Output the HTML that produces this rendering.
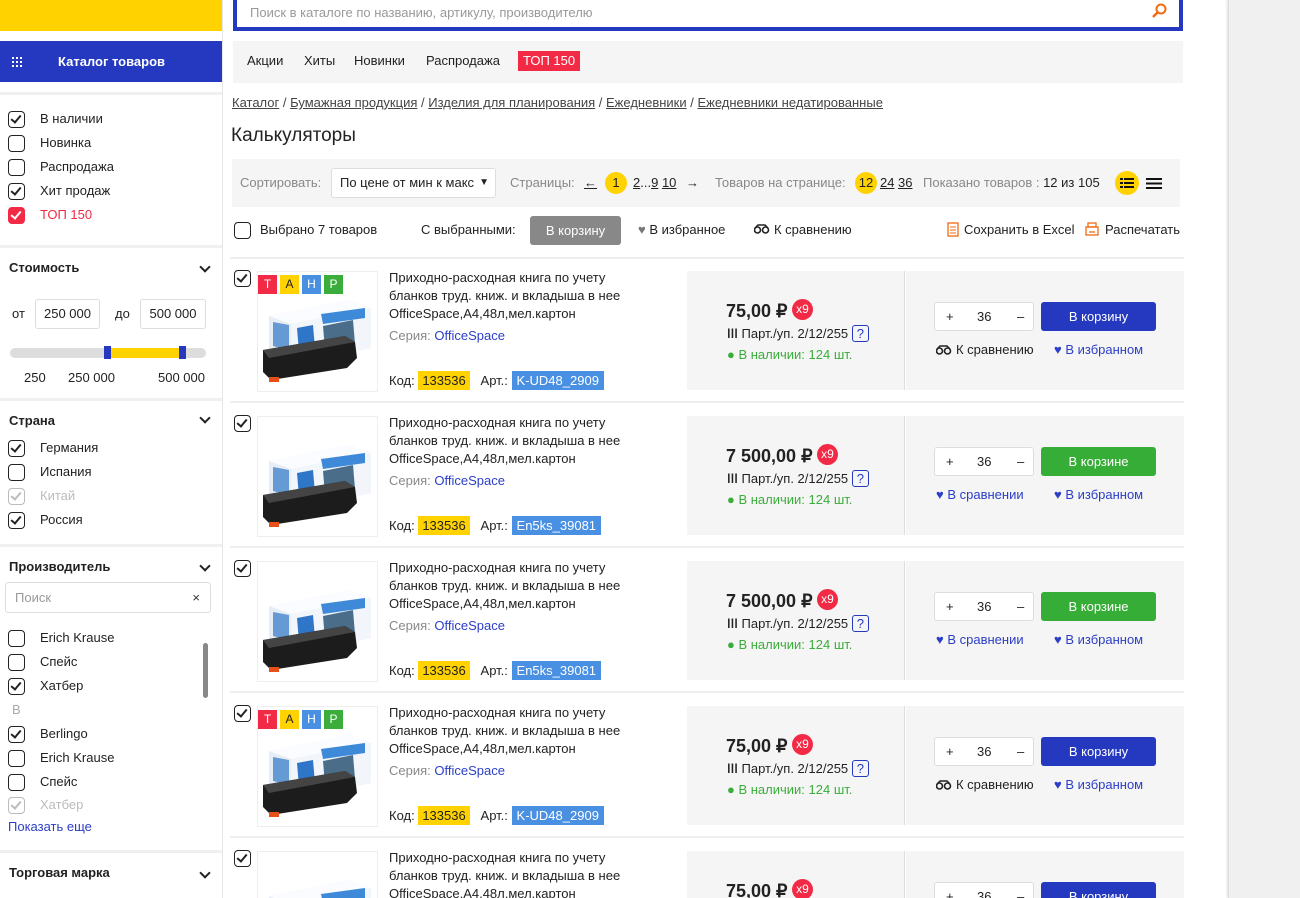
<!DOCTYPE html>
<html><head><meta charset="utf-8"><style>
*{box-sizing:border-box;margin:0;padding:0}
html{width:1300px;height:898px;overflow:hidden}
body{width:1300px;height:898px;overflow:hidden;background:#fff;font-family:"Liberation Sans","Noto Sans CJK SC",sans-serif;font-size:13px;color:#222;position:relative}
.a{position:absolute;white-space:nowrap}
.cb{position:absolute;width:17px;height:17px;border:1.5px solid #222;border-radius:4px;background:#fff}
.cb.c::after{content:"";position:absolute;left:4px;top:1px;width:4px;height:8px;border:solid #222;border-width:0 2px 2px 0;transform:rotate(40deg)}
.cb.r{background:#f22a45;border-color:#f22a45}.cb.r::after{border-color:#fff}
.cb.g{border-color:#bbb}.cb.g::after{border-color:#bbb}
.hr{position:absolute;left:0;width:222px;height:3px;background:#f0f0f0}
.h{font-weight:bold;font-size:13px}
.chev{position:absolute;width:8px;height:8px;border:solid #222;border-width:0 2px 2px 0;transform:rotate(45deg)}
.u{text-decoration:underline}
.tag{position:absolute;width:19px;height:19px;color:#fff;text-align:center;line-height:19px;font-size:12px}
.row{position:absolute;left:230px;width:954px;height:145px;border-bottom:2px solid #eee}
.pp{position:absolute;left:457px;top:13px;width:218px;height:119px;background:#f5f5f5;border-right:1px solid #ddd}
.rp{position:absolute;left:676px;top:13px;width:278px;height:119px;background:#f5f5f5}
.btn{position:absolute;color:#fff;text-align:center;border-radius:3px;font-size:13px}
.blue{color:#2b3ec6}
</style></head><body>
<svg width="0" height="0" style="position:absolute"><defs>
<g id="img"><polygon points="8,38 88,22 110,30 110,70 30,88 8,78" fill="#e6edf5"/><polygon points="8,38 88,22 110,30 30,46" fill="#fafcff"/><polygon points="30,46 110,30 110,70 30,88" fill="#f2f6fb"/><polygon points="12,44 28,47 28,72 12,68" fill="#2f76c8" opacity=".7"/><polygon points="36,50 52,47 54,70 38,74" fill="#2f76c8"/><polygon points="60,36 104,30 104,40 62,46" fill="#3f8ad8"/><polygon points="62,48 92,42 94,66 64,72" fill="#4a6e8a"/><polygon points="2,72 84,58 94,64 96,80 86,90 10,102 2,94" fill="#1c1c1c"/><polygon points="2,72 84,58 94,64 8,80" fill="#444"/><rect x="8" y="99" width="10" height="5" fill="#e8501a"/></g>
<g id="gl"><circle cx="3.5" cy="6" r="3" fill="none" stroke="#222" stroke-width="1.6"/><circle cx="11.5" cy="6" r="3" fill="none" stroke="#222" stroke-width="1.6"/><path d="M1 4 L4 1 L11 1 L14 4" fill="none" stroke="#222" stroke-width="1.4"/></g>
</defs></svg>
<!-- right strip -->
<div class="a" style="left:1228px;top:0;width:72px;height:898px;background:#f0f0f0;border-left:1px solid #ddd;box-shadow:-1px 0 2px #ddd"></div>
<!-- sidebar -->
<div class="a" style="left:222px;top:0;width:1px;height:898px;background:#e6e6e6"></div>
<div class="a" style="left:0;top:0;width:222px;height:31px;background:#ffd200"></div>
<div class="a" style="left:0;top:41px;width:222px;height:41px;background:#2438c0;color:#fff;font-weight:bold;line-height:41px;padding-left:58px">Каталог товаров</div>
<svg class="a" style="left:12px;top:57px" width="11" height="11"><g fill="#fff"><rect x="0" y="0" width="2" height="2"/><rect x="4" y="0" width="2" height="2"/><rect x="8" y="0" width="2" height="2"/><rect x="0" y="4" width="2" height="2"/><rect x="4" y="4" width="2" height="2"/><rect x="8" y="4" width="2" height="2"/><rect x="0" y="8" width="2" height="2"/><rect x="4" y="8" width="2" height="2"/><rect x="8" y="8" width="2" height="2"/></g></svg>
<div class="hr" style="top:92px"></div>
<div class="cb c" style="left:8px;top:111px"></div><div class="a" style="left:40px;top:111px">В наличии</div>
<div class="cb" style="left:8px;top:135px"></div><div class="a" style="left:40px;top:135px">Новинка</div>
<div class="cb" style="left:8px;top:159px"></div><div class="a" style="left:40px;top:159px">Распродажа</div>
<div class="cb c" style="left:8px;top:183px"></div><div class="a" style="left:40px;top:183px">Хит продаж</div>
<div class="cb c r" style="left:8px;top:207px"></div><div class="a" style="left:40px;top:207px;color:#f22a45">ТОП 150</div>
<div class="hr" style="top:245px"></div>
<div class="a h" style="left:9px;top:260px">Стоимость</div><div class="chev" style="left:201px;top:263px"></div>
<div class="a" style="left:12px;top:306px">от</div>
<div class="a" style="left:35px;top:299px;width:65px;height:30px;border:1px solid #ddd;border-radius:3px;text-align:center;line-height:28px">250 000</div>
<div class="a" style="left:115px;top:306px">до</div>
<div class="a" style="left:140px;top:299px;width:66px;height:30px;border:1px solid #ddd;border-radius:3px;text-align:center;line-height:28px">500 000</div>
<div class="a" style="left:10px;top:348px;width:196px;height:10px;background:#ddd;border-radius:5px"></div>
<div class="a" style="left:108px;top:348px;width:74px;height:10px;background:#ffd200"></div>
<div class="a" style="left:104px;top:346px;width:7px;height:13px;background:#2438c0"></div>
<div class="a" style="left:179px;top:346px;width:7px;height:13px;background:#2438c0"></div>
<div class="a" style="left:24px;top:370px">250</div><div class="a" style="left:68px;top:370px">250 000</div><div class="a" style="left:158px;top:370px">500 000</div>
<div class="hr" style="top:398px"></div>
<div class="a h" style="left:9px;top:413px">Страна</div><div class="chev" style="left:201px;top:414px"></div>
<div class="cb c" style="left:8px;top:440px"></div><div class="a" style="left:40px;top:440px">Германия</div>
<div class="cb" style="left:8px;top:464px"></div><div class="a" style="left:40px;top:464px">Испания</div>
<div class="cb c g" style="left:8px;top:488px"></div><div class="a" style="left:40px;top:488px;color:#bbb">Китай</div>
<div class="cb c" style="left:8px;top:512px"></div><div class="a" style="left:40px;top:512px">Россия</div>
<div class="hr" style="top:544px"></div>
<div class="a h" style="left:9px;top:559px">Производитель</div><div class="chev" style="left:201px;top:562px"></div>
<div class="a" style="left:5px;top:582px;width:206px;height:31px;border:1px solid #ddd;border-radius:3px;background:#fff;color:#999;line-height:29px;padding-left:9px">Поиск<span style="position:absolute;right:10px;color:#333">×</span></div>
<div class="cb" style="left:8px;top:630px"></div><div class="a" style="left:40px;top:630px">Erich Krause</div>
<div class="cb" style="left:8px;top:654px"></div><div class="a" style="left:40px;top:654px">Спейс</div>
<div class="cb c" style="left:8px;top:678px"></div><div class="a" style="left:40px;top:678px">Хатбер</div>
<div class="a" style="left:203px;top:643px;width:5px;height:55px;background:#888;border-radius:3px"></div>
<div class="a" style="left:12px;top:702px;color:#aaa">B</div>
<div class="cb c" style="left:8px;top:726px"></div><div class="a" style="left:40px;top:726px">Berlingo</div>
<div class="cb" style="left:8px;top:750px"></div><div class="a" style="left:40px;top:750px">Erich Krause</div>
<div class="cb" style="left:8px;top:774px"></div><div class="a" style="left:40px;top:774px">Спейс</div>
<div class="cb c g" style="left:8px;top:797px"></div><div class="a" style="left:40px;top:797px;color:#bbb;height:15px;overflow:hidden">Хатбер</div>
<div class="a blue" style="left:8px;top:819px">Показать еще</div>
<div class="hr" style="top:850px"></div>
<div class="a h" style="left:9px;top:865px">Торговая марка</div><div class="chev" style="left:201px;top:869px"></div>

<!-- header -->
<div class="a" style="left:233px;top:-4px;width:950px;height:35px;border:4px solid #2438c0;color:#999;padding-left:13px;line-height:26px">Поиск в каталоге по названию, артикулу, производителю</div>
<svg class="a" style="left:1151px;top:2px" width="17" height="16"><circle cx="10" cy="7" r="4.5" fill="none" stroke="#f26a10" stroke-width="2"/><line x1="7" y1="10" x2="2" y2="15" stroke="#f26a10" stroke-width="2.5"/></svg>
<div class="a" style="left:233px;top:41px;width:950px;height:42px;background:#f5f5f5"></div>
<div class="a" style="left:247px;top:53px">Акции</div><div class="a" style="left:304px;top:53px">Хиты</div><div class="a" style="left:354px;top:53px">Новинки</div><div class="a" style="left:426px;top:53px">Распродажа</div>
<div class="a" style="left:518px;top:51px;background:#f22a45;color:#fff;padding:0 5px;height:20px;line-height:20px">ТОП 150</div>
<div class="a" style="left:232px;top:95px;color:#444"><span class="u">Каталог</span> / <span class="u">Бумажная продукция</span> / <span class="u">Изделия для планирования</span> / <span class="u">Ежедневники</span> / <span class="u">Ежедневники недатированные</span></div>
<div class="a" style="left:231px;top:125px;font-size:19px">Калькуляторы</div>
<!-- toolbar -->
<div class="a" style="left:232px;top:159px;width:948px;height:48px;background:#f5f5f5"></div>
<div class="a" style="left:240px;top:175px;color:#888">Сортировать:</div>
<div class="a" style="left:331px;top:168px;width:165px;height:30px;background:#fff;border:1px solid #ddd;border-radius:3px;padding-left:8px;line-height:28px;overflow:hidden">По цене от мин к макс<span style="position:absolute;right:0;top:0;background:#fff;padding:0 6px 0 2px;font-size:10px">▼</span></div>
<div class="a" style="left:510px;top:175px;color:#888">Страницы:</div>
<div class="a u" style="left:584px;top:175px">←</div>
<div class="a" style="left:605px;top:172px;width:22px;height:22px;border-radius:50%;background:#ffd200;text-align:center;line-height:22px">1</div>
<div class="a" style="left:633px;top:175px"><span class="u">2</span>...<span class="u">9</span> <span class="u">10</span></div>
<div class="a" style="left:686px;top:175px">→</div>
<div class="a" style="left:715px;top:175px;color:#888">Товаров на странице:</div>
<div class="a" style="left:855px;top:172px;width:22px;height:22px;border-radius:50%;background:#ffd200;text-align:center;line-height:22px">12</div>
<div class="a u" style="left:880px;top:175px">24</div><div class="a u" style="left:898px;top:175px">36</div>
<div class="a" style="left:923px;top:175px;color:#888">Показано товаров : <span style="color:#222">12 из 105</span></div>
<div class="a" style="left:1115px;top:171px;width:24px;height:24px;border-radius:50%;background:#ffd200"></div>
<svg class="a" style="left:1120px;top:177px" width="14" height="12"><g fill="#111"><rect x="0" y="1" width="3" height="2"/><rect x="4" y="1" width="10" height="2"/><rect x="0" y="5" width="3" height="2"/><rect x="4" y="5" width="10" height="2"/><rect x="0" y="9" width="3" height="2"/><rect x="4" y="9" width="10" height="2"/></g></svg>
<svg class="a" style="left:1146px;top:178px" width="16" height="11"><g fill="#111"><rect x="0" y="0" width="16" height="2"/><rect x="0" y="4.5" width="16" height="2"/><rect x="0" y="9" width="16" height="2"/></g></svg>
<!-- actions -->
<div class="cb" style="left:234px;top:222px"></div><div class="a" style="left:260px;top:222px">Выбрано 7 товаров</div>
<div class="a" style="left:421px;top:222px">С выбранными:</div>
<div class="btn" style="left:530px;top:216px;width:91px;height:29px;line-height:29px;background:#888">В корзину</div>
<div class="a" style="left:638px;top:222px"><span style="color:#777">♥</span> В избранное</div>
<svg class="a" style="left:754px;top:224px" width="16" height="10"><use href="#gl"/></svg><div class="a" style="left:774px;top:222px">К сравнению</div>
<svg class="a" style="left:947px;top:222px" width="12" height="15"><rect x="1" y="1" width="10" height="13" fill="none" stroke="#f26a10" stroke-width="1.3"/><g stroke="#f26a10"><line x1="3" y1="5" x2="9" y2="5"/><line x1="3" y1="8" x2="9" y2="8"/><line x1="3" y1="11" x2="9" y2="11"/></g></svg>
<div class="a" style="left:964px;top:222px">Сохранить в Excel</div>
<svg class="a" style="left:1085px;top:222px" width="14" height="14"><rect x="3" y="1" width="8" height="4" fill="none" stroke="#f26a10" stroke-width="1.3"/><rect x="1" y="5" width="12" height="8" fill="none" stroke="#f26a10" stroke-width="1.3"/><line x1="4" y1="10" x2="10" y2="10" stroke="#f26a10" stroke-width="1.3"/></svg>
<div class="a" style="left:1105px;top:222px">Распечатать</div>
<div class="a" style="left:230px;top:257px;width:954px;height:2px;background:#eee"></div>

<div class="row" style="top:258px">
 <div class="cb c" style="left:4px;top:12px"></div>
 <div class="a" style="left:27px;top:13px;width:121px;height:121px;border:1px solid #eee"><svg width="120" height="120"><use href="#img" x="3" y="6"/></svg></div>
 <div class="tag" style="left:28px;top:17px;background:#f22a45">Т</div><div class="tag" style="left:50px;top:17px;background:#ffd200;color:#222">А</div><div class="tag" style="left:72px;top:17px;background:#4a90e2">Н</div><div class="tag" style="left:94px;top:17px;background:#3aad3a">Р</div>
 <div class="a" style="left:159px;top:11px;line-height:18px">Приходно-расходная книга по учету<br>бланков труд. книж. и вкладыша в нее<br>OfficeSpace,А4,48л,мел.картон</div>
 <div class="a" style="left:159px;top:70px;color:#888">Серия: <span class="blue">OfficeSpace</span></div>
 <div class="a" style="left:159px;top:115px">Код: <span style="background:#ffd200;padding:2px 4px">133536</span>&nbsp;&nbsp;&nbsp;Арт.: <span style="background:#4a90e2;color:#fff;padding:2px 5px">K-UD48_2909</span></div>
 <div class="pp"><div class="a" style="left:39px;top:30px;font-size:18px;font-weight:bold">75,00 ₽</div><div class="a" style="left:105px;top:28px;width:21px;height:21px;border-radius:50%;background:#f22a45;color:#fff;text-align:center;line-height:21px;font-size:12px">x9</div>
 <div class="a" style="left:40px;top:55px"><b>ǀǀǀ</b> Парт./уп. 2/12/255 <span style="border:1px solid #2438c0;color:#2438c0;border-radius:3px;padding:0 4px">?</span></div>
 <div class="a" style="left:40px;top:76px;color:#3aad3a">● В наличии: 124 шт.</div></div>
 <div class="rp"><div class="a" style="left:28px;top:31px;width:100px;height:29px;background:#fff;border:1px solid #ddd;border-radius:3px;line-height:27px"><span style="position:absolute;left:11px">+</span><span style="position:absolute;left:42px">36</span><span style="position:absolute;left:82px">–</span></div>
 <div class="btn" style="left:135px;top:31px;width:115px;height:29px;line-height:29px;background:#2438c0">В корзину</div>
 <svg class="a" style="left:30px;top:74px" width="16" height="10"><use href="#gl"/></svg><div class="a" style="left:50px;top:71px">К сравнению</div><div class="a blue" style="left:148px;top:71px">♥ В избранном</div></div>
</div>

<div class="row" style="top:403px">
 <div class="cb c" style="left:4px;top:12px"></div>
 <div class="a" style="left:27px;top:13px;width:121px;height:121px;border:1px solid #eee"><svg width="120" height="120"><use href="#img" x="3" y="6"/></svg></div>
 <div class="a" style="left:159px;top:11px;line-height:18px">Приходно-расходная книга по учету<br>бланков труд. книж. и вкладыша в нее<br>OfficeSpace,А4,48л,мел.картон</div>
 <div class="a" style="left:159px;top:70px;color:#888">Серия: <span class="blue">OfficeSpace</span></div>
 <div class="a" style="left:159px;top:115px">Код: <span style="background:#ffd200;padding:2px 4px">133536</span>&nbsp;&nbsp;&nbsp;Арт.: <span style="background:#4a90e2;color:#fff;padding:2px 5px">En5ks_39081</span></div>
 <div class="pp"><div class="a" style="left:39px;top:30px;font-size:18px;font-weight:bold">7 500,00 ₽</div><div class="a" style="left:130px;top:28px;width:21px;height:21px;border-radius:50%;background:#f22a45;color:#fff;text-align:center;line-height:21px;font-size:12px">x9</div>
 <div class="a" style="left:40px;top:55px"><b>ǀǀǀ</b> Парт./уп. 2/12/255 <span style="border:1px solid #2438c0;color:#2438c0;border-radius:3px;padding:0 4px">?</span></div>
 <div class="a" style="left:40px;top:76px;color:#3aad3a">● В наличии: 124 шт.</div></div>
 <div class="rp"><div class="a" style="left:28px;top:31px;width:100px;height:29px;background:#fff;border:1px solid #ddd;border-radius:3px;line-height:27px"><span style="position:absolute;left:11px">+</span><span style="position:absolute;left:42px">36</span><span style="position:absolute;left:82px">–</span></div>
 <div class="btn" style="left:135px;top:31px;width:115px;height:29px;line-height:29px;background:#36ad36">В корзине</div>
 <div class="a blue" style="left:30px;top:71px">♥ В сравнении</div><div class="a blue" style="left:148px;top:71px">♥ В избранном</div></div>
</div>

<div class="row" style="top:548px">
 <div class="cb c" style="left:4px;top:12px"></div>
 <div class="a" style="left:27px;top:13px;width:121px;height:121px;border:1px solid #eee"><svg width="120" height="120"><use href="#img" x="3" y="6"/></svg></div>
 <div class="a" style="left:159px;top:11px;line-height:18px">Приходно-расходная книга по учету<br>бланков труд. книж. и вкладыша в нее<br>OfficeSpace,А4,48л,мел.картон</div>
 <div class="a" style="left:159px;top:70px;color:#888">Серия: <span class="blue">OfficeSpace</span></div>
 <div class="a" style="left:159px;top:115px">Код: <span style="background:#ffd200;padding:2px 4px">133536</span>&nbsp;&nbsp;&nbsp;Арт.: <span style="background:#4a90e2;color:#fff;padding:2px 5px">En5ks_39081</span></div>
 <div class="pp"><div class="a" style="left:39px;top:30px;font-size:18px;font-weight:bold">7 500,00 ₽</div><div class="a" style="left:130px;top:28px;width:21px;height:21px;border-radius:50%;background:#f22a45;color:#fff;text-align:center;line-height:21px;font-size:12px">x9</div>
 <div class="a" style="left:40px;top:55px"><b>ǀǀǀ</b> Парт./уп. 2/12/255 <span style="border:1px solid #2438c0;color:#2438c0;border-radius:3px;padding:0 4px">?</span></div>
 <div class="a" style="left:40px;top:76px;color:#3aad3a">● В наличии: 124 шт.</div></div>
 <div class="rp"><div class="a" style="left:28px;top:31px;width:100px;height:29px;background:#fff;border:1px solid #ddd;border-radius:3px;line-height:27px"><span style="position:absolute;left:11px">+</span><span style="position:absolute;left:42px">36</span><span style="position:absolute;left:82px">–</span></div>
 <div class="btn" style="left:135px;top:31px;width:115px;height:29px;line-height:29px;background:#36ad36">В корзине</div>
 <div class="a blue" style="left:30px;top:71px">♥ В сравнении</div><div class="a blue" style="left:148px;top:71px">♥ В избранном</div></div>
</div>

<div class="row" style="top:693px">
 <div class="cb c" style="left:4px;top:12px"></div>
 <div class="a" style="left:27px;top:13px;width:121px;height:121px;border:1px solid #eee"><svg width="120" height="120"><use href="#img" x="3" y="6"/></svg></div>
 <div class="tag" style="left:28px;top:17px;background:#f22a45">Т</div><div class="tag" style="left:50px;top:17px;background:#ffd200;color:#222">А</div><div class="tag" style="left:72px;top:17px;background:#4a90e2">Н</div><div class="tag" style="left:94px;top:17px;background:#3aad3a">Р</div>
 <div class="a" style="left:159px;top:11px;line-height:18px">Приходно-расходная книга по учету<br>бланков труд. книж. и вкладыша в нее<br>OfficeSpace,А4,48л,мел.картон</div>
 <div class="a" style="left:159px;top:70px;color:#888">Серия: <span class="blue">OfficeSpace</span></div>
 <div class="a" style="left:159px;top:115px">Код: <span style="background:#ffd200;padding:2px 4px">133536</span>&nbsp;&nbsp;&nbsp;Арт.: <span style="background:#4a90e2;color:#fff;padding:2px 5px">K-UD48_2909</span></div>
 <div class="pp"><div class="a" style="left:39px;top:30px;font-size:18px;font-weight:bold">75,00 ₽</div><div class="a" style="left:105px;top:28px;width:21px;height:21px;border-radius:50%;background:#f22a45;color:#fff;text-align:center;line-height:21px;font-size:12px">x9</div>
 <div class="a" style="left:40px;top:55px"><b>ǀǀǀ</b> Парт./уп. 2/12/255 <span style="border:1px solid #2438c0;color:#2438c0;border-radius:3px;padding:0 4px">?</span></div>
 <div class="a" style="left:40px;top:76px;color:#3aad3a">● В наличии: 124 шт.</div></div>
 <div class="rp"><div class="a" style="left:28px;top:31px;width:100px;height:29px;background:#fff;border:1px solid #ddd;border-radius:3px;line-height:27px"><span style="position:absolute;left:11px">+</span><span style="position:absolute;left:42px">36</span><span style="position:absolute;left:82px">–</span></div>
 <div class="btn" style="left:135px;top:31px;width:115px;height:29px;line-height:29px;background:#2438c0">В корзину</div>
 <svg class="a" style="left:30px;top:74px" width="16" height="10"><use href="#gl"/></svg><div class="a" style="left:50px;top:71px">К сравнению</div><div class="a blue" style="left:148px;top:71px">♥ В избранном</div></div>
</div>

<div class="row" style="top:838px">
 <div class="cb c" style="left:4px;top:12px"></div>
 <div class="a" style="left:27px;top:13px;width:121px;height:121px;border:1px solid #eee"><svg width="120" height="120"><use href="#img" x="3" y="6"/></svg></div>
 <div class="a" style="left:159px;top:11px;line-height:18px">Приходно-расходная книга по учету<br>бланков труд. книж. и вкладыша в нее<br>OfficeSpace,А4,48л,мел.картон</div>
 <div class="pp"><div class="a" style="left:39px;top:30px;font-size:18px;font-weight:bold">75,00 ₽</div><div class="a" style="left:105px;top:28px;width:21px;height:21px;border-radius:50%;background:#f22a45;color:#fff;text-align:center;line-height:21px;font-size:12px">x9</div></div>
 <div class="rp"><div class="a" style="left:28px;top:31px;width:100px;height:29px;background:#fff;border:1px solid #ddd;border-radius:3px;line-height:27px"><span style="position:absolute;left:11px">+</span><span style="position:absolute;left:42px">36</span><span style="position:absolute;left:82px">–</span></div>
 <div class="btn" style="left:135px;top:31px;width:115px;height:29px;line-height:29px;background:#2438c0">В корзину</div></div>
</div>
</body></html>
